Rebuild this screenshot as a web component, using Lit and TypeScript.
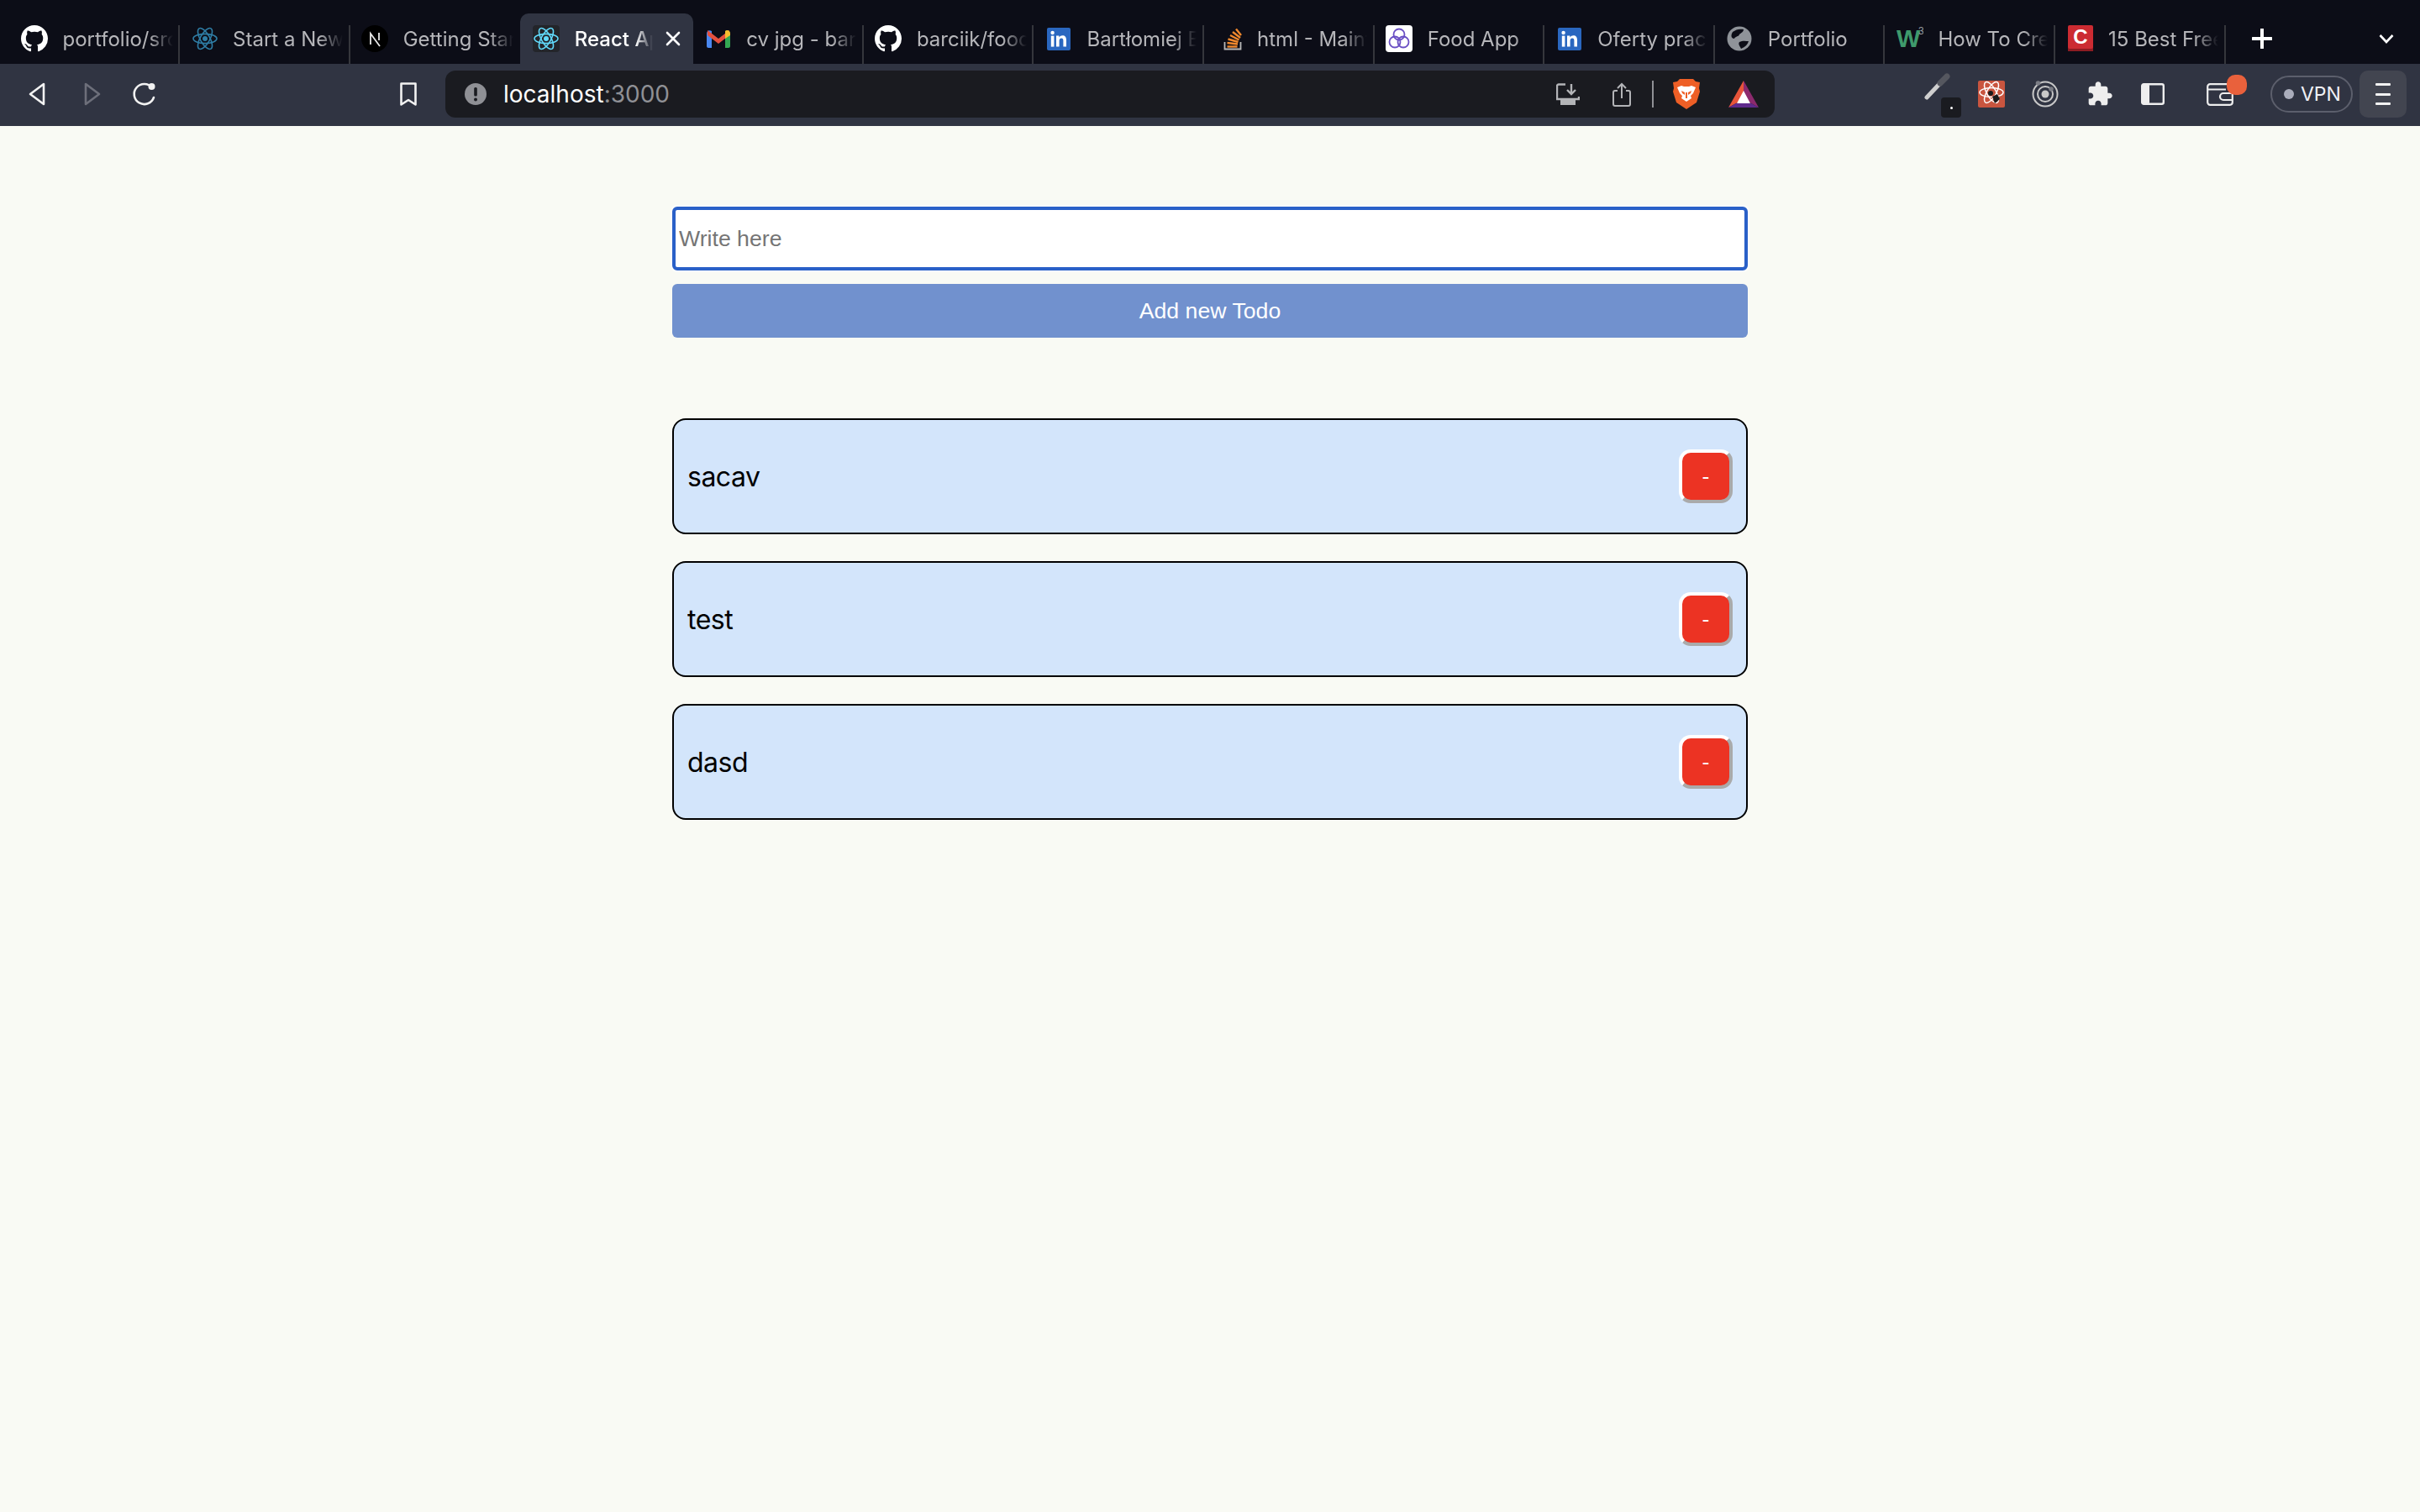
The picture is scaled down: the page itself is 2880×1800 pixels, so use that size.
import {css, html, LitElement, svg} from 'lit';
import {customElement} from 'lit/decorators.js';

const octocat = 'M8 0C3.58 0 0 3.58 0 8c0 3.54 2.29 6.53 5.47 7.59.4.07.55-.17.55-.38 0-.19-.01-.82-.01-1.49-2.01.37-2.53-.49-2.69-.94-.09-.23-.48-.94-.82-1.13-.28-.15-.68-.52-.01-.53.63-.01 1.08.58 1.23.82.72 1.21 1.87.87 2.33.66.07-.52.28-.87.51-1.07-1.78-.2-3.64-.89-3.64-3.95 0-.87.31-1.59.82-2.15-.08-.2-.36-1.02.08-2.12 0 0 .67-.21 2.2.82.64-.18 1.32-.27 2-.27.68 0 1.36.09 2 .27 1.53-1.04 2.2-.82 2.2-.82.44 1.1.16 1.92.08 2.12.51.56.82 1.27.82 2.15 0 3.07-1.87 3.75-3.65 3.95.29.25.54.73.54 1.48 0 1.07-.01 1.93-.01 2.2 0 .21.15.46.55.38A8.013 8.013 0 0016 8c0-4.42-3.58-8-8-8z';

const github = html`<svg viewBox="0 0 16 16" class="fav"><path fill="#fff" d=${octocat}></path></svg>`;

const atom = (color: string) => svg`
	<g fill="none" stroke=${color} stroke-width="1.6">
		<ellipse cx="16" cy="16" rx="14" ry="5.6"></ellipse>
		<ellipse cx="16" cy="16" rx="14" ry="5.6" transform="rotate(60 16 16)"></ellipse>
		<ellipse cx="16" cy="16" rx="14" ry="5.6" transform="rotate(120 16 16)"></ellipse>
	</g>
	<circle cx="16" cy="16" r="3" fill=${color}></circle>`;

const reactDim = html`<svg viewBox="0 0 32 32" class="fav">${atom('#2f7ea6')}</svg>`;
const reactActive = html`<svg viewBox="0 0 32 32" class="fav"><rect width="32" height="32" rx="4" fill="#23252a"></rect>${atom('#61dafb')}</svg>`;

const next = html`<svg viewBox="0 0 32 32" class="fav">
	<circle cx="16" cy="16" r="16" fill="#000"></circle>
	<path d="M11 23V10l11 15M21 9v9" fill="none" stroke="#e8e8e8" stroke-width="1.8"></path>
</svg>`;

const gmail = html`<svg viewBox="0 0 32 32" class="fav">
	<path d="M2 10c0-3 3-5 6-3v20H4c-1 0-2-1-2-2z" fill="#4a87f0"></path>
	<path d="M30 10c0-3-3-5-6-3v20h4c1 0 2-1 2-2z" fill="#34a853"></path>
	<path d="M3 6l13 10L29 6v6L16 22 3 12z" fill="#e5503f"></path>
	<path d="M24 7c2-2 6-1 6 3v2l-6 4z" fill="#f7bd2e"></path>
</svg>`;

const linkedin = html`<svg viewBox="0 0 32 32" class="fav">
	<rect x="2" y="3" width="28" height="27" rx="2" fill="#2a67c0"></rect>
	<circle cx="8.6" cy="9" r="2.2" fill="#fff"></circle>
	<rect x="6.8" y="12.6" width="3.6" height="13" fill="#fff"></rect>
	<path d="M13 12.6h3.4v1.9c1-1.5 2.3-2.2 4-2.2 3.2 0 4.6 2 4.6 5.4v7.9h-3.6v-7c0-2-.6-3.2-2.3-3.2-1.8 0-2.5 1.3-2.5 3.2v7H13z" fill="#fff"></path>
</svg>`;

const stack = html`<svg viewBox="0 0 32 32" class="fav">
	<path d="M10.500 20v8.500h19V20" fill="none" stroke="#b8b8b8" stroke-width="1.800"></path>
	<g stroke="#f0882d" stroke-width="2.400">
		<path d="M13.500 25.500h12"></path>
		<path d="M13.500 21L26 22.500"></path>
		<path d="M14.500 16.500l12 3.500"></path>
		<path d="M17 12l10.500 5.500"></path>
		<path d="M20 8l9 7"></path>
		<path d="M24 4.500l6 7.500"></path>
	</g>
</svg>`;

const food = html`<svg viewBox="0 0 32 32" class="fav">
	<rect width="32" height="32" rx="4" fill="#fff"></rect>
	<g fill="none" stroke="#6a4fc4" stroke-width="1.8">
		<circle cx="16" cy="11" r="6.500"></circle>
		<circle cx="11" cy="20" r="6.500"></circle>
		<circle cx="21" cy="20" r="6.500"></circle>
	</g>
</svg>`;

const globe = html`<svg viewBox="0 0 32 32" class="fav">
	<circle cx="16" cy="16" r="14.500" fill="#8f9399"></circle>
	<path d="M8 8c4-3 8-4 13-3 0 3-3 4-5 6-1 3-5 2-6 5-3 0-5-3-2-8zM16 20c4-2 8-1 11-1-1 4-4 7-9 9-1-3-4-5-2-8z" fill="#0c0d17"></path>
</svg>`;

const w3c = html`<svg viewBox="0 0 32 32" class="fav">
	<text x="0" y="26" class="w3-w">W</text>
	<text x="26" y="11" class="w3-3">3</text>
</svg>`;

const cFav = html`<svg viewBox="0 0 32 32" class="fav">
	<rect x="1" y="2" width="30" height="29" fill="#8e1c22"></rect>
	<rect x="1" y="0" width="30" height="28" rx="2" fill="#cc2b32"></rect>
	<text x="16" y="22" class="c-letter">C</text>
</svg>`;

interface Tab {
	title: string,
	icon: unknown,
	active?: boolean,
	noSep?: boolean,
}

const tabs: Tab[] = [
	{title: 'portfolio/src', icon: github},
	{title: 'Start a New', icon: reactDim},
	{title: 'Getting Start', icon: next, noSep: true},
	{title: 'React App', icon: reactActive, active: true, noSep: true},
	{title: 'cv jpg - bart', icon: gmail},
	{title: 'barciik/food', icon: github},
	{title: 'Bartłomiej B', icon: linkedin},
	{title: 'html - Maint', icon: stack},
	{title: 'Food App', icon: food},
	{title: 'Oferty pracy', icon: linkedin},
	{title: 'Portfolio', icon: globe},
	{title: 'How To Creat', icon: w3c},
	{title: '15 Best Free', icon: cFav},
];

const todos = ['sacav', 'test', 'dasd'];

@customElement('app-root')
export class AppRoot extends LitElement {
	protected render() {
		return html`
			<div class="strip">
				${tabs.map((tab) => html`
					<div class="tab ${tab.active ? 'active' : ''} ${tab.noSep ? 'no-sep' : ''}">
						${tab.icon}
						<span class="title">${tab.title}</span>
						${tab.active ? html`
							<svg class="close" viewBox="0 0 18 18"><path d="M2 2l14 14M16 2L2 16" stroke="#fff" stroke-width="2.600" stroke-linecap="round"></path></svg>
						` : ''}
					</div>
				`)}
				<svg class="plus" viewBox="0 0 24 24"><path d="M12 1v22M1 12h22" stroke="#fff" stroke-width="4" stroke-linecap="round"></path></svg>
				<svg class="chevron" viewBox="0 0 18 12"><path d="M1.500 2L9 10l7.500-8" fill="none" stroke="#fff" stroke-width="2.600"></path></svg>
			</div>
			${this.renderToolbar()}
			<main>
				<div class="content">
					<input class="todo-input" placeholder="Write here">
					<button class="add">Add new Todo</button>
					<div class="list">
						${todos.map((todo) => html`
							<div class="card">
								<span>${todo}</span>
								<button class="remove">-</button>
							</div>
						`)}
					</div>
				</div>
			</main>
		`;
	}

	private renderToolbar() {
		return html`
			<div class="toolbar">
				<svg class="ic back" viewBox="0 0 32 32"><path d="M23 4v24L7 16z" fill="none" stroke="#f2f2f2" stroke-width="2.600" stroke-linejoin="round"></path></svg>
				<svg class="ic forward" viewBox="0 0 32 32"><path d="M9 4v24l16-12z" fill="none" stroke="#6d6f7a" stroke-width="2.600" stroke-linejoin="round"></path></svg>
				<svg class="ic reload" viewBox="0 0 32 32">
					<path d="M25 8.500A12 12 0 1 0 27 20" fill="none" stroke="#f2f2f2" stroke-width="2.600" stroke-linecap="round"></path>
					<circle cx="24.500" cy="7" r="4" fill="#f2f2f2"></circle>
				</svg>
				<svg class="ic bookmark" viewBox="0 0 32 32"><path d="M7.500 3.500h17v25L16 23l-8.500 5.500z" fill="none" stroke="#f2f2f2" stroke-width="2.600" stroke-linejoin="round"></path></svg>
				<div class="url">
					<svg class="alert" viewBox="0 0 26 26">
						<circle cx="13" cy="13" r="13" fill="#8f9095"></circle>
						<rect x="11.200" y="5" width="3.600" height="10.500" rx="1.500" fill="#1a1b20"></rect>
						<circle cx="13" cy="19.500" r="2" fill="#1a1b20"></circle>
					</svg>
					<span class="host">localhost<span class="port">:3000</span></span>
					<svg class="u-download" viewBox="0 0 28 26">
						<path d="M11 1.500H3a2 2 0 0 0-2 2V16M27 16v3H1v-3" fill="none" stroke="#b3b4b7" stroke-width="2.400"></path>
						<path d="M18 1v11M13 8l5 5 5-5" fill="none" stroke="#b3b4b7" stroke-width="2.400"></path>
						<rect x="5" y="20" width="18" height="6" fill="#b3b4b7"></rect>
					</svg>
					<svg class="u-share" viewBox="0 0 22 29">
						<path d="M6 10H3a2 2 0 0 0-2 2v14a2 2 0 0 0 2 2h16a2 2 0 0 0 2-2V12a2 2 0 0 0-2-2h-3" fill="none" stroke="#b3b4b7" stroke-width="2"></path>
						<path d="M11 19V2M6 7l5-5 5 5" fill="none" stroke="#b3b4b7" stroke-width="2"></path>
					</svg>
					<div class="u-divider"></div>
					<svg class="u-lion" viewBox="0 0 32 36">
						<path d="M8 0h16l3 3 5 1-1 7 1 4-4 13-12 8-12-8L0 15l1-4-1-7 5-1z" fill="#ee5f26"></path>
						<path d="M5 10l5-2 3 1h6l3-1 5 2-3 7-3 3 1 3-6 4-6-4 1-3-3-3z" fill="#fff"></path>
						<path d="M10 14l4 2v3l-3-2zM22 14l-4 2v3l3-2zM15 16h2v7h-2z" fill="#ee5f26"></path>
					</svg>
					<svg class="u-bat" viewBox="0 0 36 32">
						<path d="M18 0L0 32l18-10z" fill="#e8553a"></path>
						<path d="M18 0l18 32-18-10z" fill="#8c2a6e"></path>
						<path d="M0 32h36l-9-5H9z" fill="#5f2a8c"></path>
						<path d="M18 12l-8 15h16z" fill="#fff"></path>
					</svg>
				</div>
				<div class="dropper">
					<svg viewBox="0 0 32 32" class="dropper-ic">
						<path d="M3 29L19 12" stroke="#cfcfcf" stroke-width="5" stroke-linecap="round"></path>
						<path d="M19 12L27 4" stroke="#55575f" stroke-width="7" stroke-linecap="round"></path>
					</svg>
					<div class="dropper-badge"><i></i></div>
				</div>
				<svg class="ic ext" viewBox="0 0 32 32">
					<rect width="32" height="32" rx="2" fill="#c9553f"></rect>
					<g fill="none" stroke="#fff" stroke-width="1.500">
						<ellipse cx="16" cy="14" rx="14" ry="5.500"></ellipse>
						<ellipse cx="16" cy="14" rx="14" ry="5.500" transform="rotate(60 16 14)"></ellipse>
						<ellipse cx="16" cy="14" rx="14" ry="5.500" transform="rotate(120 16 14)"></ellipse>
					</g>
					<circle cx="15" cy="15" r="3" fill="#1b1b1b"></circle>
					<path d="M17 19l6-3 3 6-6 5z" fill="#1b1b1b"></path>
				</svg>
				<svg class="ic orbit" viewBox="0 0 32 32">
					<circle cx="16" cy="16" r="14.500" fill="none" stroke="#c8c8c8" stroke-width="2"></circle>
					<circle cx="16" cy="16" r="9" fill="none" stroke="#c8c8c8" stroke-width="2"></circle>
					<circle cx="16" cy="16" r="4.500" fill="#c8c8c8"></circle>
					<circle cx="7.500" cy="3" r="2.800" fill="#7b7d85"></circle>
					<circle cx="23" cy="10" r="2.800" fill="#7b7d85"></circle>
				</svg>
				<svg class="ic puzzle" viewBox="0 0 24 24"><path fill="#eeeeee" d="M20.500 11H19V7c0-1.100-.9-2-2-2h-4V3.500C13 2.120 11.880 1 10.500 1S8 2.120 8 3.500V5H4c-1.100 0-1.990.9-1.990 2v3.800H3.500c1.490 0 2.700 1.210 2.700 2.700s-1.210 2.700-2.700 2.700H2V20c0 1.100.9 2 2 2h3.800v-1.500c0-1.490 1.210-2.700 2.700-2.700 1.490 0 2.700 1.210 2.700 2.700V22H17c1.100 0 2-.9 2-2v-4h1.500c1.380 0 2.500-1.120 2.500-2.500S21.880 11 20.500 11z"></path></svg>
				<svg class="side" viewBox="0 0 28 26">
					<rect x="1.200" y="1.200" width="25.600" height="23.600" rx="2" fill="none" stroke="#eeeeee" stroke-width="2.400"></rect>
					<rect x="1" y="1" width="9" height="24" rx="2" fill="#eeeeee"></rect>
				</svg>
				<div class="wallet">
					<svg viewBox="0 0 32 27" class="wallet-ic">
						<rect x="1.200" y="1.200" width="29.600" height="24.600" rx="3" fill="none" stroke="#eeeeee" stroke-width="2.200"></rect>
						<path d="M1 7.500h22M30 12H20a4 4 0 0 0 0 8h10" fill="none" stroke="#eeeeee" stroke-width="2.200"></path>
					</svg>
					<div class="wallet-dot"></div>
				</div>
				<div class="vpn"><i></i>VPN</div>
				<div class="menu"><i></i><i></i><i></i></div>
			</div>
		`;
	}

	static styles = css`
		:host {
			display: block;
			font-family: Inter, "Liberation Sans", sans-serif;
		}

		.strip {
			display: flex;
			align-items: flex-end;
			height: 76px;
			padding-left: 11.5px;
			background: #0c0d17;
		}
		.tab {
			position: relative;
			display: flex;
			align-items: center;
			flex: none;
			box-sizing: border-box;
			width: 202.6px;
			height: 60px;
			padding-left: 13.5px;
			color: #b6b6ba;
			font-size: 24px;
		}
		.tab::after {
			content: '';
			position: absolute;
			right: 0;
			top: 14px;
			bottom: 0;
			width: 2px;
			background: #35363c;
		}
		.tab.no-sep::after {
			display: none;
		}
		.tab.active {
			width: 206px;
			padding-left: 15px;
			background: #303442;
			border-radius: 10px 10px 0 0;
			color: #fff;
			font-weight: 500;
		}
		.fav {
			flex: none;
			width: 32px;
			height: 32px;
		}
		.title {
			overflow: hidden;
			width: 131px;
			margin-left: 17.5px;
			white-space: nowrap;
			mask-image: linear-gradient(to right, #000 78%, transparent 100%);
		}
		.active .title {
			width: 93px;
		}
		.close {
			width: 18px;
			height: 18px;
			margin-left: 15.5px;
		}
		.w3-w {
			fill: #3f9a6c;
			font: bold 30px "Liberation Sans", sans-serif;
		}
		.w3-3 {
			fill: #9a9ba0;
			font: 12px "Liberation Sans", sans-serif;
		}
		.c-letter {
			fill: #fff;
			font: bold 24px "Liberation Sans", sans-serif;
			text-anchor: middle;
		}
		.plus {
			flex: none;
			align-self: center;
			width: 24px;
			height: 24px;
			margin: 16px 0 0 31px;
		}
		.chevron {
			flex: none;
			align-self: center;
			width: 18px;
			height: 12px;
			margin: 16px 0 0 127px;
		}

		.toolbar {
			display: flex;
			align-items: center;
			box-sizing: border-box;
			height: 74px;
			padding: 8px 0 10px 29px;
			background: #303442;
		}
		.ic {
			flex: none;
			width: 32px;
			height: 32px;
		}
		.forward, .reload {
			margin-left: 31.500px;
		}
		.bookmark {
			margin-left: 282px;
		}
		.url {
			display: flex;
			align-items: center;
			flex: none;
			box-sizing: border-box;
			width: 1582px;
			height: 56px;
			margin-left: 28px;
			padding-left: 23px;
			background: #1a1b20;
			border-radius: 12px;
		}
		.alert {
			flex: none;
			width: 26px;
			height: 26px;
		}
		.host {
			margin-left: 20px;
			color: #fff;
			font-size: 28px;
		}
		.port {
			color: #8f9095;
		}
		.u-download {
			width: 28px;
			height: 26px;
			margin-left: auto;
		}
		.u-share {
			width: 22px;
			height: 29px;
			margin-left: 39px;
		}
		.u-divider {
			width: 2px;
			height: 32px;
			margin-left: 25px;
			background: #8f9095;
		}
		.u-lion {
			width: 32px;
			height: 36px;
			margin-left: 23px;
		}
		.u-bat {
			width: 36px;
			height: 32px;
			margin-left: 34px;
			margin-right: 19px;
		}
		.dropper {
			position: relative;
			flex: none;
			width: 44px;
			height: 56px;
			margin-left: 178px;
		}
		.dropper-ic {
			position: absolute;
			left: 0;
			top: 3px;
			width: 32px;
			height: 32px;
		}
		.dropper-badge {
			position: absolute;
			left: 20px;
			top: 32px;
			display: flex;
			align-items: center;
			justify-content: center;
			width: 24px;
			height: 24px;
			background: #1a1b20;
			border-radius: 4px;
		}
		.dropper-badge i {
			width: 3px;
			height: 3px;
			background: #fff;
			border-radius: 50%;
		}
		.ext {
			margin-left: 20px;
		}
		.orbit {
			margin-left: 32px;
		}
		.puzzle {
			margin-left: 33px;
		}
		.side {
			flex: none;
			width: 28px;
			height: 26px;
			margin-left: 33px;
		}
		.wallet {
			position: relative;
			flex: none;
			width: 48px;
			height: 26px;
			margin-left: 50px;
		}
		.wallet-ic {
			width: 32px;
			height: 27px;
		}
		.wallet-dot {
			position: absolute;
			left: 24px;
			top: -10px;
			width: 24px;
			height: 24px;
			background: #e9613c;
			border-radius: 10px;
		}
		.vpn {
			display: flex;
			align-items: center;
			flex: none;
			box-sizing: border-box;
			width: 98px;
			height: 44px;
			margin-left: 28px;
			padding-left: 14px;
			border: 2px solid #5c5f6c;
			border-radius: 22px;
			color: #f0f1f6;
			font-size: 23px;
		}
		.vpn i {
			width: 12px;
			height: 12px;
			margin-right: 8px;
			background: #aaadbb;
			border-radius: 50%;
		}
		.menu {
			display: flex;
			flex-direction: column;
			align-items: center;
			justify-content: center;
			gap: 8.500px;
			flex: none;
			width: 56px;
			height: 56px;
			margin-left: 8px;
			background: #424550;
			border-radius: 10px;
		}
		.menu i {
			width: 18px;
			height: 3px;
			background: #f2f2f2;
			border-radius: 1px;
		}

		main {
			min-height: 1650px;
			background: #f9faf4;
		}
		.content {
			display: flex;
			flex-direction: column;
			width: 1280px;
			margin: 0 auto;
			padding-top: 96px;
		}
		.todo-input {
			box-sizing: border-box;
			height: 76px;
			padding: 0 4px;
			background: #fff;
			border: 4px solid #2a60c8;
			border-radius: 6px;
			box-shadow: 0 0 0 2px #fdfdfb;
			outline: none;
			font: 26.67px "Liberation Sans", Arial, sans-serif;
		}
		.todo-input::placeholder {
			color: #757575;
		}
		.add {
			height: 64px;
			margin-top: 16px;
			padding: 0;
			background: #7191ce;
			border: none;
			border-radius: 6px;
			color: #fff;
			font: 26.67px "Liberation Sans", Arial, sans-serif;
		}
		.list {
			display: flex;
			flex-direction: column;
			gap: 32px;
			margin-top: 96px;
		}
		.card {
			display: flex;
			align-items: center;
			justify-content: space-between;
			box-sizing: border-box;
			height: 138px;
			padding: 0 16px;
			background: #d3e5fb;
			border: 2px solid #000;
			border-radius: 16px;
			color: #000;
			font-size: 32px;
			letter-spacing: -0.5px;
		}
		.remove {
			box-sizing: border-box;
			width: 64px;
			height: 64px;
			padding: 0;
			background: #ec3323;
			border: 4px solid;
			border-color: #fff #aaa #aaa #fff;
			border-radius: 14px;
			color: #fff;
			font: 26.67px "Liberation Sans", Arial, sans-serif;
		}
	`;
}
